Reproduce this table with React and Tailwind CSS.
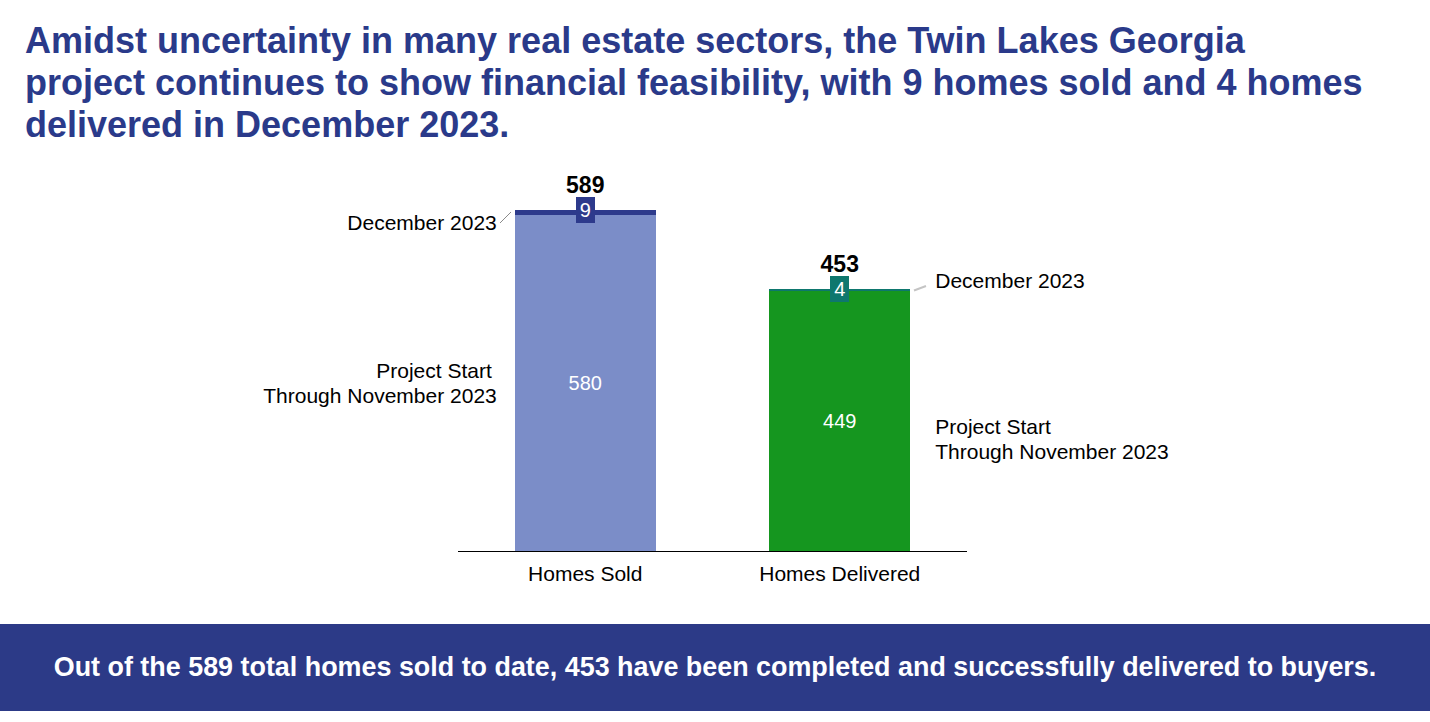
const SCALE = 341 / 589;

const bars = [
    {
        name: "Homes Sold",
        total: 589,
        prior: 580,
        month: 9,
        barColor: "bg-[#7b8dc8]",
        monthColor: "bg-[#2d3a8c]",
    },
    {
        name: "Homes Delivered",
        total: 453,
        prior: 449,
        month: 4,
        barColor: "bg-[#15961f]",
        monthColor: "bg-[#0e776e]",
    },
];

function Bar({ bar, side }) {
    return (
        <div className="flex flex-col items-center">
            <div className="text-[23px] font-bold leading-[24px] text-black">{bar.total}</div>
            <div
                className={`relative z-10 -mb-[13px] flex h-[26px] w-[19px] items-center justify-center text-[20px] text-white ${bar.monthColor}`}
            >
                {bar.month}
            </div>
            <div className="relative flex w-[141px] flex-col" style={{ height: `${bar.total * SCALE}px` }}>
                <div className={bar.monthColor} style={{ height: `${bar.month * SCALE}px` }} />
                <div className={`flex flex-1 items-center justify-center text-[20px] text-white ${bar.barColor}`}>
                    {bar.prior}
                </div>

                {/* callouts beside the bar */}
                {side === "left" ? (
                    <>
                        <svg className="absolute right-full top-[1px] mr-[3px]" width="13" height="13" viewBox="0 0 13 13">
                            <line x1="1" y1="12" x2="12" y2="1" stroke="#8a8a8a" strokeWidth="1" />
                        </svg>
                        <div className="absolute right-full top-[1px] mr-[18px] whitespace-nowrap text-[21px] leading-[24px] text-black">
                            December 2023
                        </div>
                        <div className="absolute right-full top-[148px] mr-[18px] whitespace-nowrap text-right text-[21px] leading-[25px] text-black">
                            <div className="mr-[5px]">Project Start</div>
                            <div>Through November 2023</div>
                        </div>
                    </>
                ) : (
                    <>
                        <svg className="absolute left-full top-[-5px] ml-[3px]" width="14" height="8" viewBox="0 0 14 8">
                            <line x1="1" y1="6.5" x2="13" y2="2" stroke="#c4c4c4" strokeWidth="2" />
                        </svg>
                        <div className="absolute left-full top-[-20px] ml-[25px] whitespace-nowrap text-[21px] leading-[24px] text-black">
                            December 2023
                        </div>
                        <div className="absolute left-full top-[125px] ml-[25px] whitespace-nowrap text-[21px] leading-[25px] text-black">
                            <div>Project Start</div>
                            <div>Through November 2023</div>
                        </div>
                    </>
                )}
            </div>
        </div>
    );
}

export default function App() {
    return (
        <div className="h-[722px] w-[1430px] overflow-hidden bg-white font-['Liberation_Sans',Arial,sans-serif]">
            <h1 className="px-[25px] pt-[20px] text-[36px] font-bold leading-[42px] text-[#2a3a8a]">
                Amidst uncertainty in many real estate sectors, the Twin Lakes Georgia
                <br />
                project continues to show financial feasibility, with 9 homes sold and 4 homes
                <br />
                delivered in December 2023.
            </h1>

            <div className="ml-[458px] w-[509px]">
                <div className="flex h-[406px] items-end border-b border-black">
                    {bars.map((bar, i) => (
                        <div className="flex flex-1 justify-center" key={bar.name}>
                            <Bar bar={bar} side={i === 0 ? "left" : "right"} />
                        </div>
                    ))}
                </div>
                <div className="mt-[10px] flex">
                    {bars.map((bar) => (
                        <div className="flex-1 text-center text-[21px] leading-[24px] text-black" key={bar.name}>
                            {bar.name}
                        </div>
                    ))}
                </div>
            </div>

            <div className="mt-[38px] flex h-[87px] items-center justify-center bg-[#2c3a87]">
                <p className="text-[26.9px] font-bold text-white">
                    Out of the 589 total homes sold to date, 453 have been completed and successfully delivered to buyers.
                </p>
            </div>
        </div>
    );
}
